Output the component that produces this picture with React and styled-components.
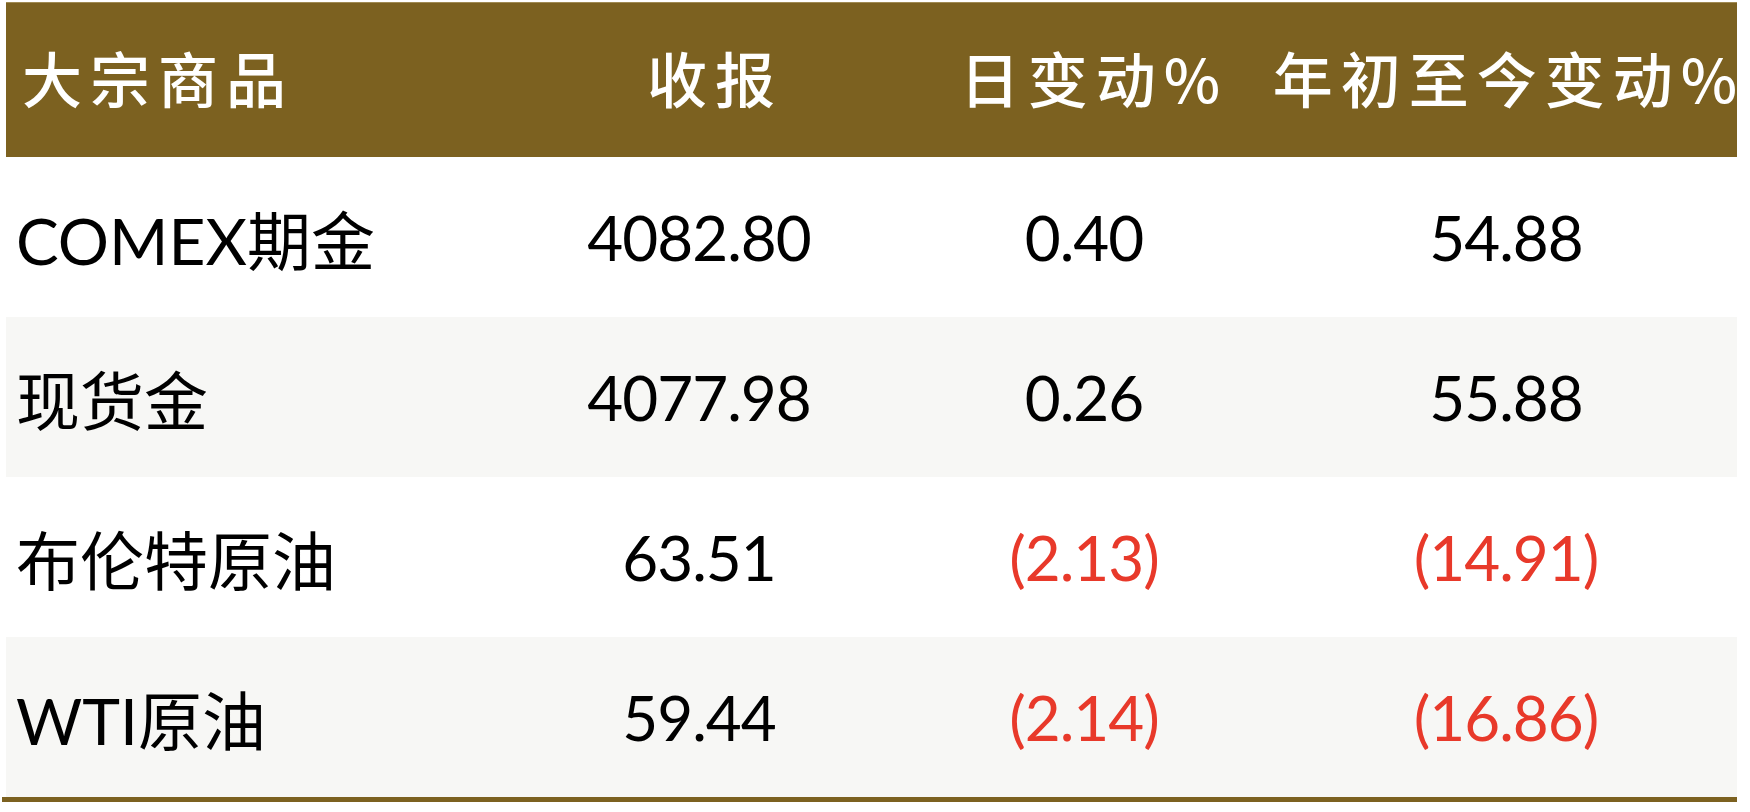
import styled, { createGlobalStyle } from 'styled-components';

const rows = [
  { name: 'COMEX期金', close: '4082.80', day: '0.40', ytd: '54.88', shade: false },
  { name: '现货金', close: '4077.98', day: '0.26', ytd: '55.88', shade: true },
  { name: '布伦特原油', close: '63.51', day: '(2.13)', ytd: '(14.91)', shade: false },
  { name: 'WTI原油', close: '59.44', day: '(2.14)', ytd: '(16.86)', shade: true },
];

export default function App() {
  return (
    <>
      <GlobalStyle />
      <Wrapper>
        <Table>
          <HeaderRow>
            <HeadCell $align="left">大宗商品</HeadCell>
            <HeadCell $shift={22}>收报</HeadCell>
            <HeadCell $shift={10}>日变动%</HeadCell>
            <HeadCell $shift={-4}>年初至今变动%</HeadCell>
          </HeaderRow>
          {rows.map((r) => (
            <BodyRow key={r.name} $shade={r.shade}>
              <NameCell>{r.name}</NameCell>
              <NumCell>{r.close}</NumCell>
              <NumCell $neg={r.day.startsWith('(')}>{r.day}</NumCell>
              <NumCell $neg={r.ytd.startsWith('(')}>{r.ytd}</NumCell>
            </BodyRow>
          ))}
        </Table>
        <BottomRule />
      </Wrapper>
    </>
  );
}

const GlobalStyle = createGlobalStyle`
  body {
    margin: 0;
    background: #ffffff;
    font-family: Lato, "Noto Sans CJK SC", sans-serif;
  }
`;
const Wrapper = styled.div`
  width: 1750px;
  padding-top: 2px;
`;
const Table = styled.div`
  margin-left: 6px;
  width: 1731px;
`;
const HeaderRow = styled.div`
  display: grid;
  grid-template-columns: 509px 378px 392px 452px;
  height: 154px;
  background: #7c6120;
  border-top: 1px solid #a08a52;
`;
const HeadCell = styled.div`
  display: flex;
  align-items: center;
  justify-content: ${(p) => (p.$align === 'left' ? 'flex-start' : 'center')};
  padding-left: ${(p) => (p.$align === 'left' ? '16px' : `${Math.max(p.$shift || 0, 0)}px`)};
  padding-right: ${(p) => `${Math.max(-(p.$shift || 0), 0)}px`};
  color: #ffffff;
  font-family: "Noto Sans CJK SC", sans-serif;
  font-weight: 500;
  font-size: 60px;
  letter-spacing: 8px;
  white-space: nowrap;
  padding-bottom: 8px;
`;
const BodyRow = styled.div`
  display: grid;
  grid-template-columns: 509px 378px 392px 452px;
  height: 160px;
  background: ${(p) => (p.$shade ? '#f7f7f5' : '#ffffff')};
`;
const NameCell = styled.div`
  display: flex;
  align-items: center;
  padding-left: 10px;
  color: #000000;
  font-family: Lato, "Noto Sans CJK SC", sans-serif;
  font-size: 64px;
  white-space: nowrap;
`;
const NumCell = styled.div`
  display: flex;
  align-items: center;
  justify-content: center;
  padding-right: 10px;
  color: ${(p) => (p.$neg ? '#e8392a' : '#000000')};
  font-family: Lato, sans-serif;
  font-size: 62px;
  letter-spacing: -1px;
  white-space: nowrap;
`;
const BottomRule = styled.div`
  margin-left: 2px;
  width: 1735px;
  height: 5px;
  background: #7c6120;
`;
